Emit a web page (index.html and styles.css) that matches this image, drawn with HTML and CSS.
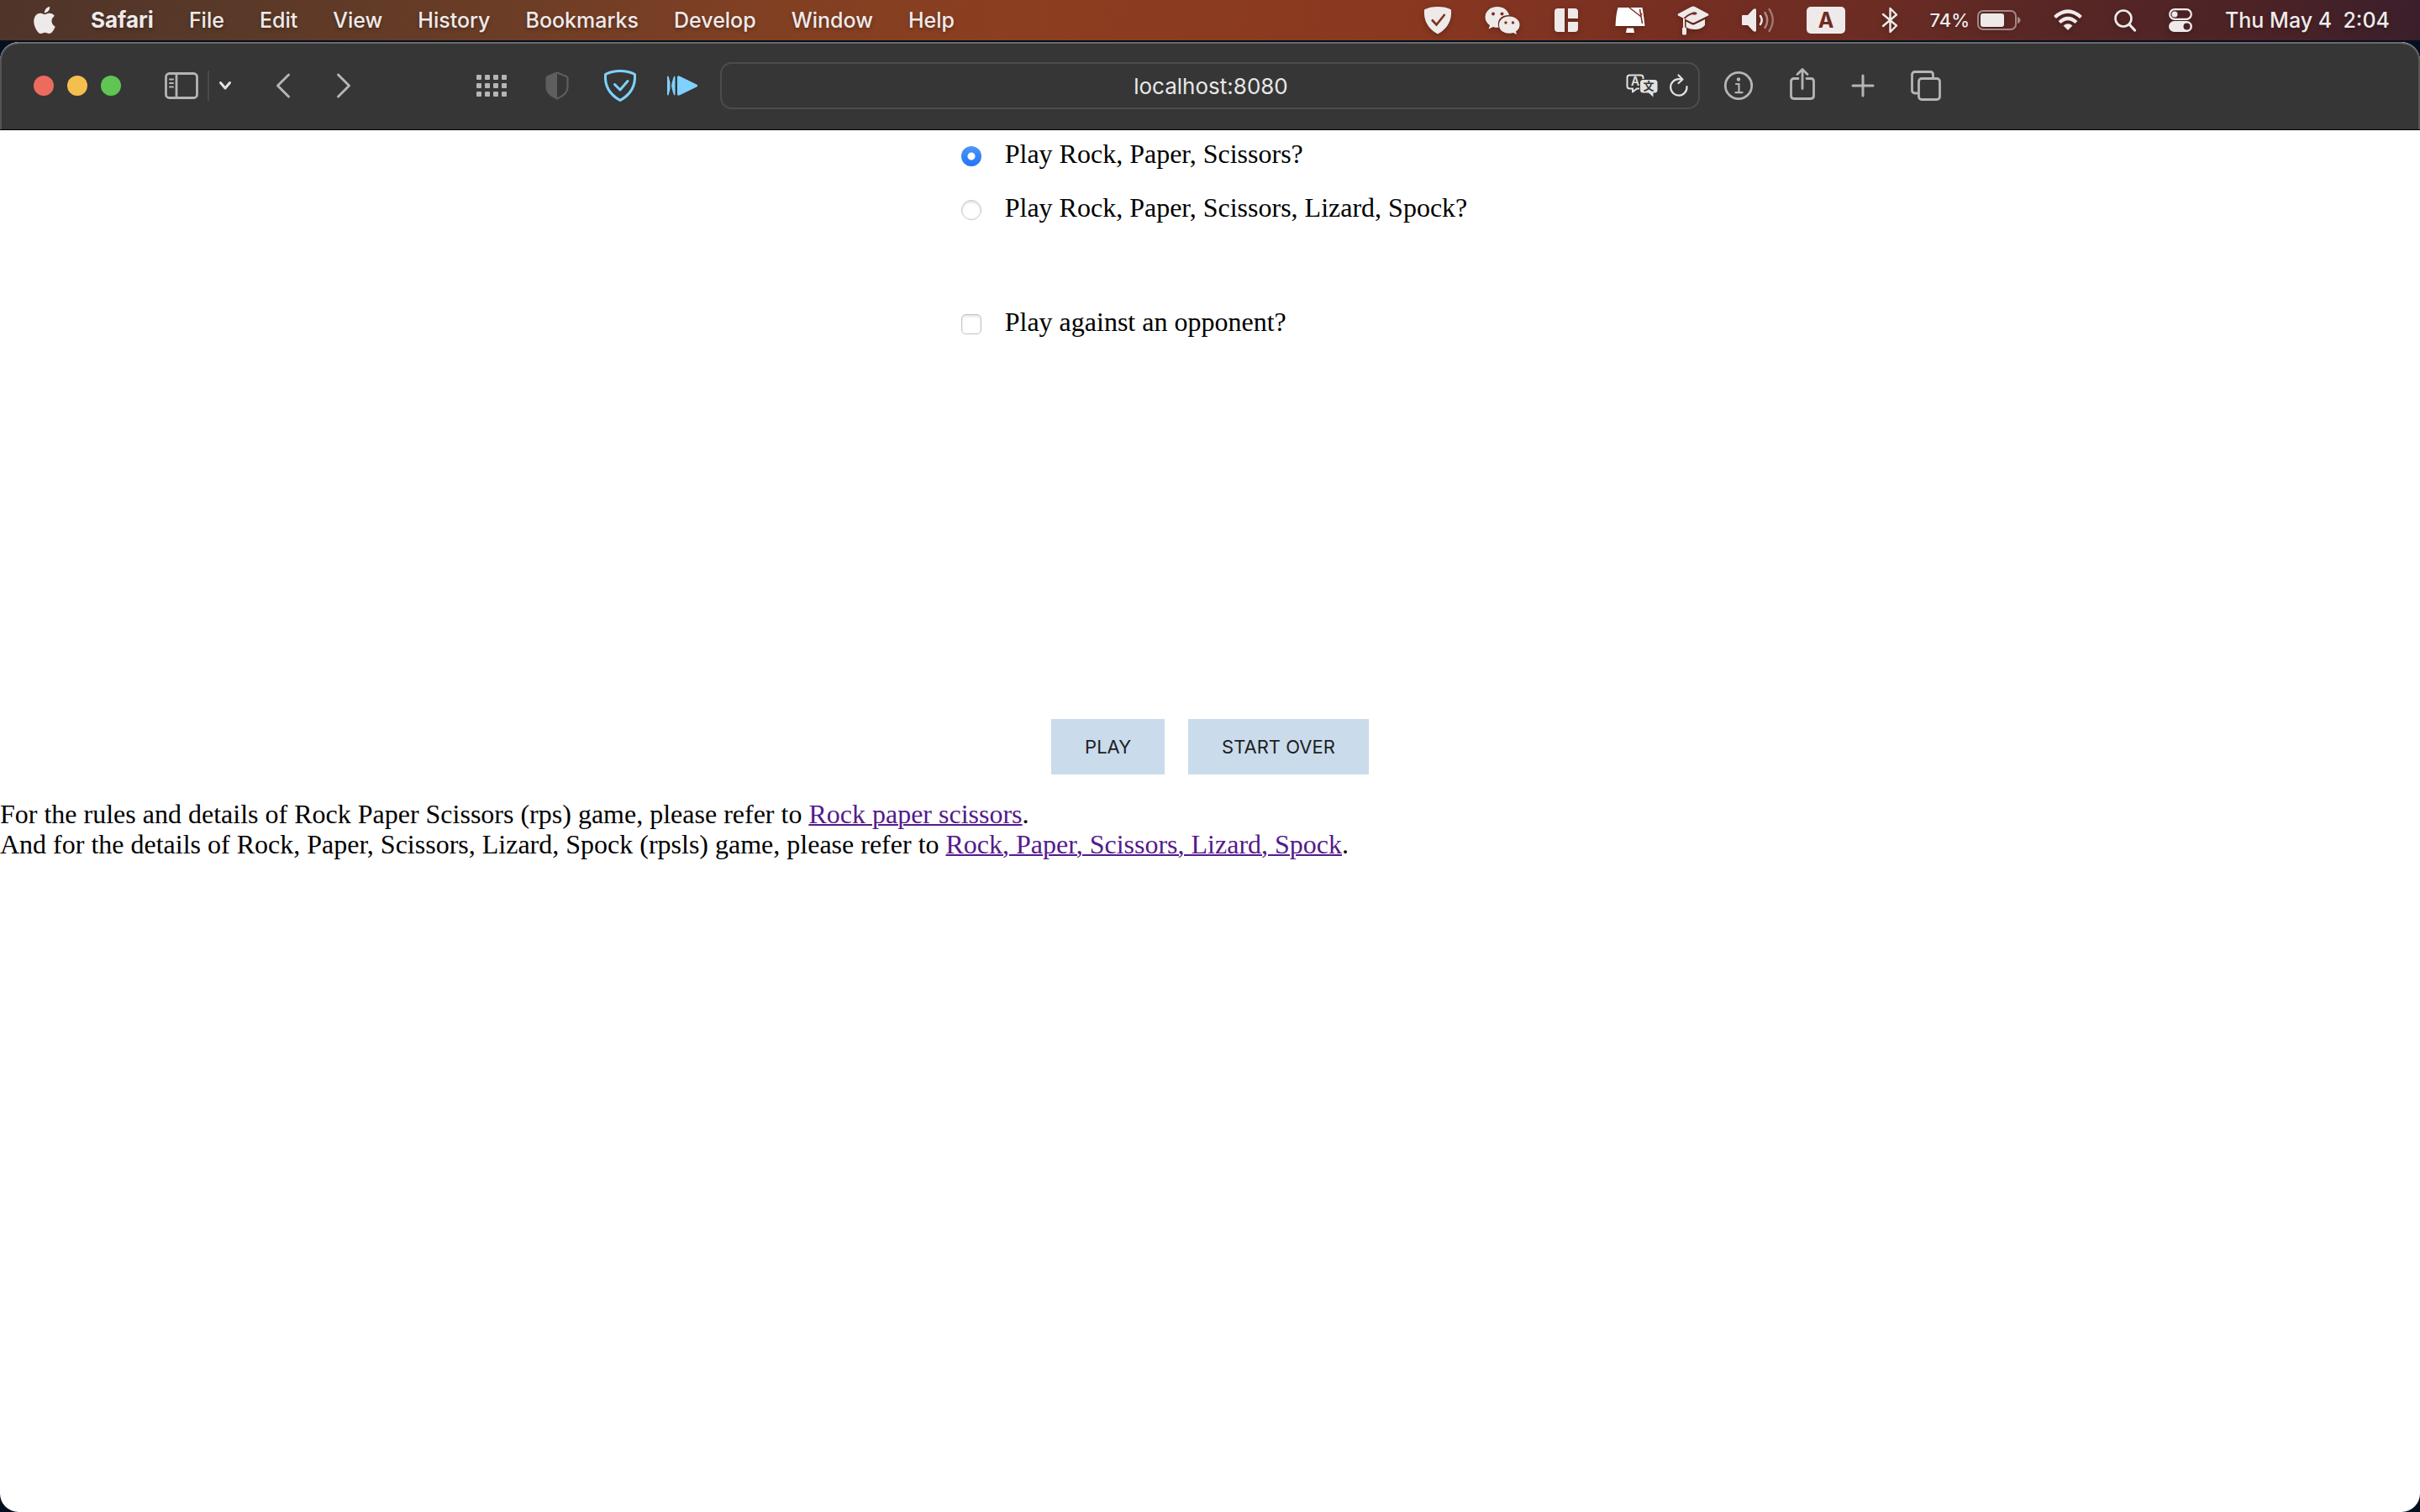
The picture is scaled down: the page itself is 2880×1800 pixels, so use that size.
FILE: index.html
```html
<!DOCTYPE html>
<html lang="en">
<head>
<meta charset="utf-8">
<title>localhost:8080</title>
<link rel="stylesheet" href="styles.css">
</head>
<body>
<header class="menubar">
  <nav class="menus" aria-label="Menu bar">
    <button class="plain" aria-label="Apple menu"><svg width="26" height="32" viewBox="2 0 20 24" preserveAspectRatio="none" fill="currentColor"><path d="M12.152 6.896c-.948 0-2.415-1.078-3.96-1.04-2.04.027-3.91 1.183-4.961 3.014-2.117 3.675-.546 9.103 1.519 12.09 1.013 1.454 2.208 3.09 3.792 3.039 1.52-.065 2.09-.987 3.935-.987 1.831 0 2.35.987 3.96.948 1.637-.026 2.676-1.48 3.676-2.948 1.156-1.688 1.636-3.325 1.662-3.415-.039-.013-3.182-1.221-3.22-4.857-.026-3.04 2.48-4.494 2.597-4.559-1.429-2.09-3.623-2.324-4.39-2.376-2-.156-3.675 1.09-4.61 1.09zM15.53 3.83c.843-1.012 1.4-2.427 1.245-3.83-1.207.052-2.662.805-3.532 1.818-.78.896-1.454 2.338-1.273 3.714 1.338.104 2.715-.688 3.559-1.701"/></svg></button>
    <button class="plain app">Safari</button>
    <button class="plain">File</button>
    <button class="plain">Edit</button>
    <button class="plain">View</button>
    <button class="plain">History</button>
    <button class="plain">Bookmarks</button>
    <button class="plain">Develop</button>
    <button class="plain">Window</button>
    <button class="plain">Help</button>
  </nav>
  <div class="status">
    <svg width="34" height="34" viewBox="0 0 34 34"><path fill="currentColor" d="M17 1C23 1 29 2 33 4.500C34 17 29 27 17 33.500C5 27 0 17 1 4.500C5 2 11 1 17 1Z"/><path d="M10 16.500L15.500 22.500L25.500 10" fill="none" stroke="#7e3020" stroke-width="2.600"/></svg>
    <svg width="44" height="34" viewBox="0 0 44 34"><path fill="currentColor" d="M16 1C7.500 1 1.500 6.500 1.500 13.500C1.500 17.500 3.800 21 7 23.300L5.500 27.500L11 25C13 25.800 15.500 26 17.500 25.800C14.500 16 22 10.500 30 11C28.500 5 23 1 16 1Z"/><path fill="currentColor" d="M30 12.500C23 12.500 18 17 18 22.500C18 28.500 23 32.800 30 32.800C31.800 32.800 33.500 32.500 35 32L39 34L38 30.500C41 28.500 42.500 25.500 42.500 22.500C42.500 17 37 12.500 30 12.500Z"/><g fill="#7e3020"><circle cx="11" cy="9.500" r="2"/><circle cx="21.500" cy="9.500" r="2"/><circle cx="26" cy="20" r="1.700"/><circle cx="34.500" cy="20" r="1.700"/></g></svg>
    <svg width="36" height="28" viewBox="0 0 36 28" fill="currentColor"><path d="M6 0H14V28H6Q2 28 2 24V4Q2 0 6 0ZM18 0H26Q30 0 30 4V12H18ZM18 16H30V24Q30 28 26 28H18Z"/></svg>
    <svg width="36" height="32" viewBox="0 0 36 32"><path fill="#fff" d="M3.500 1H32.500Q34 9 35.500 23H.500Q1 9 3.500 1ZM14 25.500H22L23 31H13Z"/><path fill="none" stroke="#7e3020" stroke-width="1.500" d="M17 1L30.500 11.500M29.500 3L32.500 20M30 11L32 8"/></svg>
    <svg width="38" height="36" viewBox="0 0 38 36"><path fill="currentColor" d="M1 10.500L17 2Q19 1 21 2L37 10.500Q38 11.500 37 12.500L21 20.500Q19 21.500 17 20.500L1 12.500Q0 11.500 1 10.500ZM10.500 19.500L17 23Q19 24 21 23L33 17V24Q29 29 21 29Q14 29 10.500 26Z"/><path d="M20 9.500Q13 11 8.500 16" fill="none" stroke="#75302a" stroke-width="2"/><ellipse cx="20.500" cy="10" rx="3" ry="1.700" fill="#75302a"/><path stroke="currentColor" stroke-width="2" d="M8 16V27"/><rect x="6" y="26.500" width="5" height="9" rx="1.500" fill="currentColor"/></svg>
    <svg width="40" height="32" viewBox="0 0 40 32"><path fill="currentColor" d="M1 11Q1 10 2 10H8L14.500 3Q18 1 18 4V28Q18 31 14.500 29L8 22H2Q1 22 1 21Z"/><g fill="none" stroke="currentColor" stroke-width="2.400" stroke-linecap="round"><path d="M23 11Q26.500 16 23 21"/><path opacity=".5" d="M28.500 7Q34 16 28.500 25"/><path opacity=".4" d="M33.500 3Q42 16 33.500 29"/></g></svg>
    <span class="input-source">A</span>
    <svg width="24" height="32" viewBox="-3 0 24 32" fill="none" stroke="currentColor" stroke-width="2.400" stroke-linejoin="round" stroke-linecap="round"><path d="M4 9L20 22.500L12.500 30V2L20 9.500L4 23"/></svg>
    <div class="battery"><span>74%</span><svg width="52" height="24" viewBox="1 0 52 24"><rect x="1" y="1" width="45" height="22" rx="6" fill="none" stroke="currentColor" stroke-opacity=".5" stroke-width="2"/><rect x="4" y="4" width="28" height="16" rx="3" fill="currentColor"/><path d="M48 8Q51.500 9 51.500 12T48 16Z" fill="currentColor" opacity=".5"/></svg></div>
    <svg width="34" height="26" viewBox="0 0 34 26" fill="none" stroke="currentColor" stroke-width="4.200"><path d="M1.500 9.500Q17-4.500 32.500 9.500"/><path d="M7 15.500Q17 6.500 27 15.500"/><path fill="currentColor" stroke="none" d="M17 25L11.500 19.500Q17 15 22.500 19.500Z"/></svg>
    <svg width="26" height="28" viewBox="0 0 26 28" fill="none" stroke="currentColor" stroke-width="2.600" stroke-linecap="round"><circle cx="11" cy="12" r="9.500"/><path d="M18 19L24.500 26" stroke-width="3.200"/></svg>
    <svg width="30" height="28" viewBox="0 0 30 28"><rect x="2.200" y="1.200" width="25.600" height="11.600" rx="5.800" fill="none" stroke="currentColor" stroke-width="2.200"/><circle cx="8" cy="7" r="3.500" fill="currentColor"/><rect x="1" y="15" width="28" height="13" rx="6.500" fill="currentColor"/><circle cx="22.500" cy="21.500" r="4" fill="#4a2226"/></svg>
    <time class="clock"><span>Thu May 4</span><span>2:04</span></time>
  </div>
</header>
<div class="window">
  <header class="toolbar">
    <div class="toolbar-left">
      <div class="navigation">
        <div class="lights">
          <button class="light close" aria-label="Close"></button>
          <button class="light minimise" aria-label="Minimise"></button>
          <button class="light zoom" aria-label="Zoom"></button>
        </div>
        <div class="sidebar-tools">
          <button class="plain" aria-label="Show sidebar"><svg width="40" height="32" viewBox="0 0 40 32" fill="none" stroke="currentColor" stroke-width="2.800" stroke-linecap="round"><rect x="1.500" y="1.500" width="37" height="29" rx="4"/><path d="M14 2V30"/><path stroke-width="2" d="M6 8.500H10M6 13H10M6 17.500H10"/></svg></button>
          <span class="divider"></span>
          <button class="plain bright" aria-label="Tab groups"><svg width="16" height="12" viewBox="0 0 16 12" fill="none" stroke="currentColor" stroke-width="3" stroke-linecap="round" stroke-linejoin="round"><path d="M2.500 2.500L8 9L13.500 2.500"/></svg></button>
        </div>
        <div class="history">
          <button class="plain" aria-label="Back"><svg width="18" height="30" viewBox="0 0 18 30" fill="none" stroke="currentColor" stroke-width="3" stroke-linecap="round" stroke-linejoin="round"><path d="M15.500 2L2.500 15L15.500 28"/></svg></button>
          <button class="plain" aria-label="Forward"><svg width="18" height="30" viewBox="0 0 18 30" fill="none" stroke="currentColor" stroke-width="3" stroke-linecap="round" stroke-linejoin="round"><path d="M2.500 2L15.500 15L2.500 28"/></svg></button>
        </div>
      </div>
      <div class="extensions">
        <button class="plain" aria-label="Apps"><svg width="40" height="26" viewBox="0 0 40 26" fill="currentColor"><g id="dots"><rect width="6" height="6" rx="1"/><rect x="10" width="6" height="6" rx="1"/><rect x="20" width="6" height="6" rx="1"/><rect x="30" width="6" height="6" rx="1"/></g><use href="#dots" y="10"/><use href="#dots" y="20"/></svg></button>
        <button class="plain dim" aria-label="Privacy report"><svg width="40" height="34" viewBox="-6 0 40 34"><path d="M14 1.500L25 6Q26.500 6.500 26.500 8V19Q26.500 27 14 32.500Q1.500 27 1.500 19V8Q1.500 6.500 3 6Z" fill="none" stroke="currentColor" stroke-width="2.200"/><path d="M14 1L2 6V20Q2 27 14 33Z" fill="currentColor"/></svg></button>
        <button class="plain blue" aria-label="Ad blocker"><svg width="38" height="38" viewBox="0 0 38 38" fill="none" stroke="currentColor" stroke-width="3" stroke-linejoin="round" stroke-linecap="round"><path d="M19 1.500Q29 1.500 36.500 5.500Q38 26 19 36.500Q0 26 1.500 5.500Q9 1.500 19 1.500Z"/><path d="M12.500 17.500L19 24L28 13.500"/></svg></button>
        <button class="plain blue" aria-label="Playback speed"><svg width="38" height="24" viewBox="0 0 38 24" fill="currentColor"><path d="M1 1.500Q1 .500 2.500 .500L4.500 8V16L2.500 23.500Q1 23.500 1 22.500ZM9.500 .500Q10.500 .500 10.500 2V22Q10.500 23.500 9.500 23.500Q8 22 6 12Q8 2 9.500 .500ZM13 2Q13-.500 16 .700L36 10.500Q38.500 12 36 13.500L16 23.300Q13 24.500 13 22Z"/></svg></button>
      </div>
    </div>
    <div class="address">
      <input class="url" type="text" value="localhost:8080" aria-label="Address">
      <button class="plain bright" aria-label="Translate"><svg width="38" height="28" viewBox="0 0 38 28"><path d="M16 17.500H13L8 21.500V17.500H4.500Q1.500 17.500 1.500 14.500V4.500Q1.500 1.500 4.500 1.500H17.500Q20.500 1.500 20.500 4.500V6" fill="none" stroke="currentColor" stroke-width="2" stroke-linejoin="round"/><path d="M20.500 7H34Q37.500 7 37.500 10.500V19Q37.500 22.500 34 22.500H32.500V27.500L27 22.500H20.500Q17 22.500 17 19V10.500Q17 7 20.500 7Z" fill="currentColor"/><text class="glyph-latin" x="11" y="14" text-anchor="middle">A</text><text class="glyph-han" x="27" y="19" text-anchor="middle">文</text></svg></button>
      <button class="plain bright" aria-label="Reload"><svg width="22" height="28" viewBox="0 0 22 28" fill="none" stroke="currentColor" stroke-width="2.200" stroke-linecap="round" stroke-linejoin="round"><path d="M20.500 15A9.700 9.700 0 1 1 11 6.200H15M10.500 1.500L15.500 6.500L10.500 11"/></svg></button>
    </div>
    <div class="actions">
      <button class="plain" aria-label="Page information"><svg width="36" height="36" viewBox="0 0 36 36" fill="none" stroke="currentColor" stroke-width="2.800" stroke-linecap="round"><circle cx="18" cy="18" r="15.700"/><circle cx="18" cy="10.500" r="2.200" fill="currentColor" stroke="none"/><path stroke-width="2.200" d="M15 16H18.500V26M14.500 26.200H22.500"/></svg></button>
      <button class="plain share" aria-label="Share"><svg width="30" height="38" viewBox="0 0 30 38" fill="none" stroke="currentColor" stroke-width="2.800" stroke-linecap="round" stroke-linejoin="round"><path d="M10 12.500H5Q1.500 12.500 1.500 16V33Q1.500 36.500 5 36.500H25Q28.500 36.500 28.500 33V16Q28.500 12.500 25 12.500H20M15 24.500V2M9 7.500L15 1.500L21 7.500"/></svg></button>
      <button class="plain" aria-label="New tab"><svg width="28" height="28" viewBox="0 0 28 28" stroke="currentColor" stroke-width="3" stroke-linecap="round"><path d="M14 2V26M2 14H26"/></svg></button>
      <button class="plain" aria-label="Show all tabs"><svg width="36" height="36" viewBox="0 0 36 36" fill="none" stroke="currentColor" stroke-width="2.800"><path d="M9 27H5Q1.500 27 1.500 23.500V5Q1.500 1.500 5 1.500H23Q26.500 1.500 26.500 5V9"/><rect x="9.500" y="9.500" width="25" height="25" rx="3.500"/></svg></button>
    </div>
  </header>
  <main class="page">
    <form class="game">
      <div class="options">
        <label class="option"><input type="radio" name="game" checked>Play Rock, Paper, Scissors?</label>
        <label class="option"><input type="radio" name="game">Play Rock, Paper, Scissors, Lizard, Spock?</label>
        <label class="option opponent"><input type="checkbox" name="opponent">Play against an opponent?</label>
      </div>
      <div class="buttons">
        <button class="action" type="button">PLAY</button>
        <button class="action" type="reset">START OVER</button>
      </div>
    </form>
    <p class="rules">For the rules and details of Rock Paper Scissors (rps) game, please refer to <a href="#rps">Rock paper scissors</a>.<br>
    And for the details of Rock, Paper, Scissors, Lizard, Spock (rpsls) game, please refer to <a href="#rpsls">Rock, Paper, Scissors, Lizard, Spock</a>.</p>
  </main>
</div>
</body>
</html>
```
FILE: styles.css
```css
* { box-sizing: border-box; }

body {
  margin: 0;
  min-height: 100vh;
  display: flex;
  flex-direction: column;
  background: #04101f;
  font-family: Inter, "Liberation Sans", sans-serif;
  font-size: 26px;
}

svg { display: block; flex: none; overflow: visible; }

.plain {
  padding: 0;
  border: 0;
  background: none;
  color: inherit;
  font: inherit;
  text-shadow: inherit;
  white-space: nowrap;
}

/* Menu bar */
.menubar {
  height: 48px;
  padding: 0 36px 0 40px;
  display: flex;
  align-items: center;
  justify-content: space-between;
  background: linear-gradient(100deg, #4f342a 0%, #5a3928 10%, #6c3d26 21%, #804023 31%, #8c3e20 42%, #8a3820 58%, #752e22 70%, #6a2c24 78%, #592725 84%, #4a2226 94%, #3a1f2b 100%);
  color: #efeaea;
  font-size: 25px;
  font-weight: 500;
  line-height: 32px;
  text-shadow: 0 2px 4px rgba(0, 0, 0, .3);
}

.menus { display: flex; align-items: center; gap: 42px; }
.menus .app { font-size: 26px; font-weight: 700; }
.status { display: flex; align-items: center; gap: 38px; }
.status svg { filter: drop-shadow(0 2px 3px rgba(0, 0, 0, .25)); }

.input-source {
  width: 46px;
  height: 32px;
  border-radius: 5px;
  background: #efeaea;
  color: #6f2b24;
  font-weight: 700;
  text-align: center;
  text-shadow: none;
}

.battery { display: flex; align-items: center; gap: 10px; font-size: 22px; }
.battery span { width: 48px; text-align: right; }
.clock { min-width: 196px; display: flex; justify-content: space-between; }

/* Browser window */
.window {
  flex: 1;
  margin-top: 2px;
  display: flex;
  flex-direction: column;
  overflow: hidden;
  border-radius: 22px;
  background: #fff;
}

.toolbar {
  height: 105px;
  padding-bottom: 2px;
  display: grid;
  grid-template-columns: 1fr minmax(0, 1166px) 1fr;
  align-items: center;
  border: solid #6b6b6b;
  border-width: 2px 0 0;
  border-radius: 22px 22px 0 0;
  border-bottom: 1px solid #000;
  background: #363636;
  box-shadow: inset 2px 0 #555, inset -2px 0 #555;
  color: #b5b5b5;
}

.toolbar-left, .navigation, .lights, .sidebar-tools, .history, .extensions, .actions {
  display: flex;
  align-items: center;
}

.toolbar-left { justify-content: space-between; padding: 0 26px 0 40px; }
.navigation { gap: 52px; }
.lights { gap: 16px; }
.light { width: 24px; height: 24px; padding: 0; border: 0; border-radius: 50%; }
.close { background: #ed6a5e; }
.minimise { background: #f5bf4f; }
.zoom { background: #61c554; }
.sidebar-tools { gap: 11px; }
.divider { width: 2px; height: 36px; background: #4a4a4a; }
.history { gap: 54px; }
.extensions { gap: 36px; }
.actions { gap: 43px; padding-left: 28px; }
.share { margin-bottom: 4px; }
.bright { color: #e2e2e2; }
.dim { color: #5e5e5e; }
.blue { color: #7fd1ff; }

.address {
  height: 56px;
  padding: 0 12px 0 102px;
  display: flex;
  align-items: center;
  gap: 14px;
  border: 2px solid #4c4c4c;
  border-radius: 14px;
}

.url {
  flex: 1;
  min-width: 0;
  padding: 0;
  border: 0;
  outline: 0;
  background: none;
  color: #e8e8e8;
  font: inherit;
  text-align: center;
}

.glyph-latin { fill: currentColor; font: 600 14px Inter, sans-serif; }
.glyph-han { fill: #363636; font: 700 13px "Noto Sans CJK SC", sans-serif; }

/* Game page */
.page {
  color: #000;
  font: 32px/36px "Liberation Serif", serif;
}

.options {
  width: max-content;
  margin: 0 auto;
  padding: 10px 0 0 10px;
  display: flex;
  flex-direction: column;
  gap: 28px;
}

.option { display: flex; align-items: center; gap: 28px; }
.opponent { margin-top: 72px; }

.option input {
  appearance: none;
  width: 24px;
  height: 24px;
  margin: 6px 0 0;
  border: 1px solid #c4c4c4;
  background: #fff;
  box-shadow: inset 0 2px 3px rgba(0, 0, 0, .12);
}

.option input[type="radio"] { border-radius: 50%; }
.option input[type="checkbox"] { border-radius: 5px; }
.option input[type="radio"]:checked {
  border: 0;
  background: radial-gradient(circle, #fff 4px, transparent 5px), linear-gradient(#4b97f8, #2374f6);
  box-shadow: none;
}

.buttons {
  margin-top: 455px;
  display: flex;
  justify-content: center;
  gap: 28px;
}

.action {
  height: 66px;
  padding: 0 40px;
  border: 0;
  background: #cadbec;
  color: #1d1f21;
  font: 22px Inter, "Liberation Sans", sans-serif;
}

.rules { margin: 29px 0 0; }
.rules a { color: #551a8b; text-decoration-thickness: 2px; }
```
